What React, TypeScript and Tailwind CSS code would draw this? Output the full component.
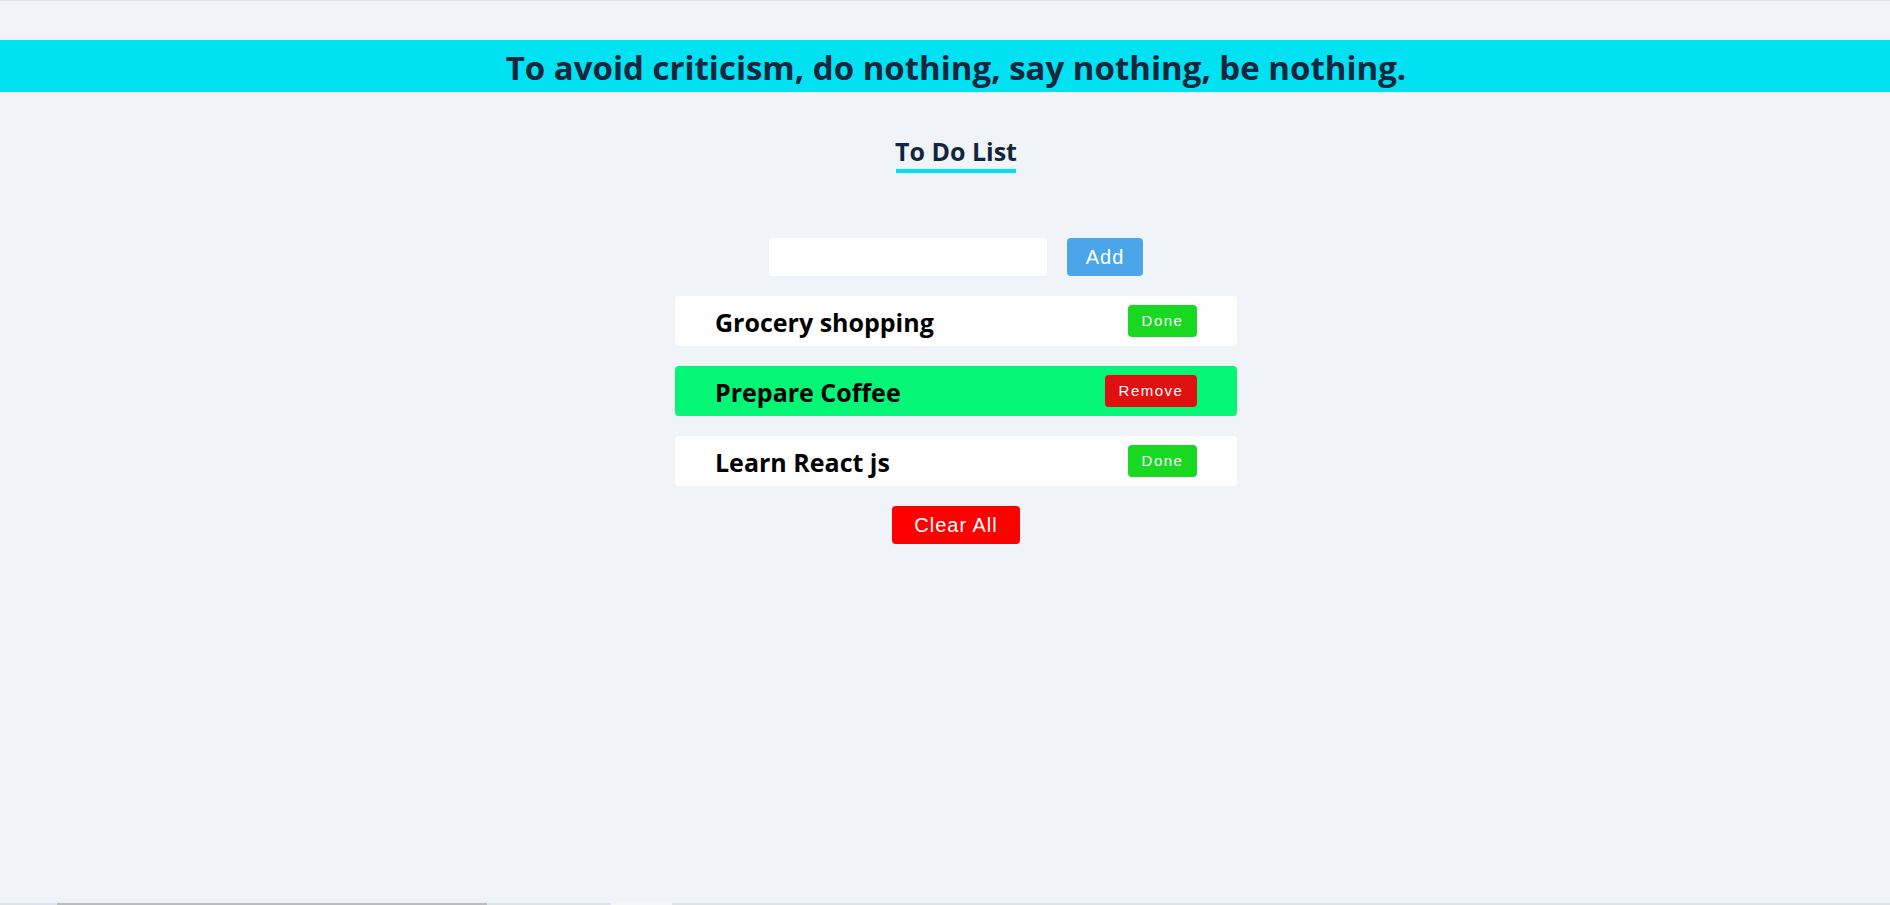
import React, { useState } from 'react'

type Todo = { id: number; text: string; done: boolean }

const App = () => {
  const [text, setText] = useState('')
  const [todos, setTodos] = useState<Todo[]>([
    { id: 1, text: 'Grocery shopping', done: false },
    { id: 2, text: 'Prepare Coffee', done: true },
    { id: 3, text: 'Learn React js', done: false }
  ])

  const addTodo = () => {
    if (!text.trim()) return
    setTodos([...todos, { id: Date.now(), text: text.trim(), done: false }])
    setText('')
  }

  const toggle = (id: number) => {
    setTodos(todos.map(t => (t.id === id ? { ...t, done: !t.done } : t)))
  }

  return (
    <div className="h-screen w-full overflow-hidden bg-[#f0f4f8] flex flex-col border-t border-[#dcdfe3] font-['Open_Sans',sans-serif]">
      <div className="w-[1912px] flex-1 flex flex-col items-center">
        {/* quote banner */}
        <div className="mt-[39px] w-full h-[52px] bg-[#00e1f2] flex items-center justify-center">
          <h1 className="mt-[2px] text-[33px] font-bold text-[#15263d] leading-none">
            To avoid criticism, do nothing, say nothing, be nothing.
          </h1>
        </div>

        {/* title */}
        <h2 className="mt-[44px] text-[25px] font-bold text-[#12263f] leading-[30px]">To Do List</h2>
        <div className="mt-[3px] w-[120px] h-[4px] bg-[#00e1f2]"></div>

        {/* input row */}
        <div className="mt-[65px] flex items-center gap-[20px]">
          <input
            value={text}
            onChange={e => setText(e.target.value)}
            className="w-[278px] h-[38px] bg-white rounded-[4px] outline-none px-3"
          />
          <button
            onClick={addTodo}
            className="w-[76px] h-[38px] rounded-[4px] bg-[#4aa6e8] text-white text-[20px] tracking-[1px] font-['Liberation_Sans',sans-serif]"
          >
            Add
          </button>
        </div>

        {/* list */}
        <div className="mt-[20px] w-[562px] flex flex-col gap-[20px]">
          {todos.map(todo => (
            <div
              key={todo.id}
              className={`h-[50px] rounded-[4px] flex items-center justify-between pl-[40px] pr-[40px] ${
                todo.done ? 'bg-[#05f577]' : 'bg-white'
              }`}
            >
              <span className="pt-[4px] text-[25px] font-bold text-black">{todo.text}</span>
              {todo.done ? (
                <button
                  onClick={() => toggle(todo.id)}
                  className="w-[92px] h-[32px] rounded-[4px] bg-[#e01010] text-white text-[15px] tracking-[1.5px] font-['Liberation_Sans',sans-serif]"
                >
                  Remove
                </button>
              ) : (
                <button
                  onClick={() => toggle(todo.id)}
                  className="w-[69px] h-[32px] rounded-[4px] bg-[#18d822] text-white text-[15px] tracking-[1.5px] font-['Liberation_Sans',sans-serif]"
                >
                  Done
                </button>
              )}
            </div>
          ))}
        </div>

        <button
          onClick={() => setTodos([])}
          className="mt-[20px] w-[128px] h-[38px] rounded-[4px] bg-[#ff0000] text-white text-[20px] tracking-[1px] font-['Liberation_Sans',sans-serif]"
        >
          Clear All
        </button>
      </div>

      {/* bottom scrollbar strip */}
      <div className="h-[2px] w-full flex">
        <div className="w-[57px] bg-[#dde3ea]"></div>
        <div className="w-[430px] bg-white border border-[#b8bcc0]"></div>
        <div className="w-[124px] bg-[#dde3ea]"></div>
        <div className="w-[61px] bg-[#f4f6f8]"></div>
        <div className="flex-1 bg-[#dde3ea]"></div>
      </div>
    </div>
  )
}

export default App
